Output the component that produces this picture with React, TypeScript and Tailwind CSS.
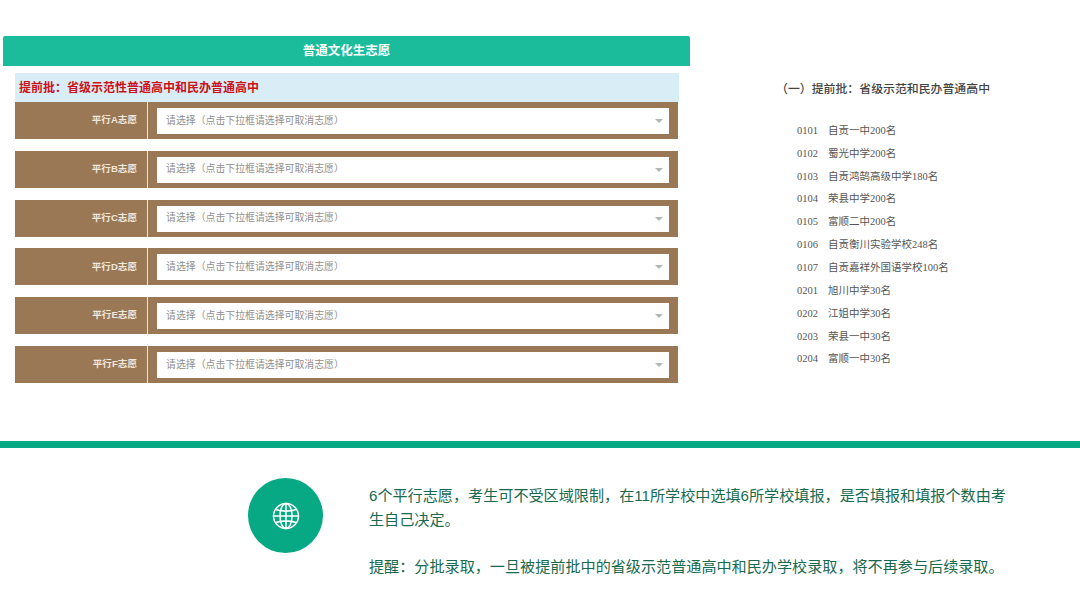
import React from "react";

const rows = ["A", "B", "C", "D", "E", "F"];
const schools: [string, string][] = [
  ["0101", "自贡一中200名"],
  ["0102", "蜀光中学200名"],
  ["0103", "自贡鸿鹄高级中学180名"],
  ["0104", "荣县中学200名"],
  ["0105", "富顺二中200名"],
  ["0106", "自贡衡川实验学校248名"],
  ["0107", "自贡嘉祥外国语学校100名"],
  ["0201", "旭川中学30名"],
  ["0202", "江姐中学30名"],
  ["0203", "荣县一中30名"],
  ["0204", "富顺一中30名"],
];

const sans = "font-['Liberation_Sans','Noto_Sans_CJK_SC',sans-serif]";

export default function App() {
  return (
    <div className={`w-[1080px] h-[608px] overflow-hidden bg-white flex flex-col ${sans}`}>
      <div className="h-[441px] flex items-start pt-[36px] pl-[3px] shrink-0">
        <div className="w-[687px] shrink-0">
          <div className="h-[30px] pt-[1px] bg-[#1abc9c] rounded-t-[2px] flex items-center justify-center text-white text-[12.5px] font-bold">
            普通文化生志愿
          </div>
          <div className="pt-[7px] pl-[12px] w-[676px]">
            <div className="h-[29px] bg-[#d9edf7] flex items-center pl-[4px] text-[12px] font-bold text-[#cc1118] w-[664px]">
              提前批：省级示范性普通高中和民办普通高中
            </div>
            <div className="flex flex-col gap-[11.8px] w-[663px]">
              {rows.map((r) => (
                <div key={r} className="h-[37px] bg-[#9b7855] flex">
                  <div className="w-[133px] shrink-0 border-r border-[#f0e6da] flex items-center justify-end pr-[10px] text-[9.6px] text-[#f0e6da] font-semibold">
                    平行{r}志愿
                  </div>
                  <div className="ml-[9px] mt-[6px] w-[512px] h-[26px] bg-white flex items-center justify-between pl-[9px] pr-[6px] text-[9.9px] text-[#8f8f8f]">
                    <span>请选择（点击下拉框请选择可取消志愿）</span>
                    <span className="w-0 h-0 border-x-[4px] border-x-transparent border-t-[4px] border-t-[#b5b5b5]" />
                  </div>
                </div>
              ))}
            </div>
          </div>
        </div>
        <div className="ml-[88px] pt-[46px] text-[#444]">
          <div className="text-[11.9px] font-medium leading-[14px] -ml-[2px]">（一）提前批：省级示范和民办普通高中</div>
          <div className="mt-[23.4px] ml-[19px] flex flex-col text-[#555]">
            {schools.map(([code, name]) => (
              <div key={code} className="h-[22.85px] flex items-center font-['Liberation_Serif','Noto_Sans_CJK_SC',serif] text-[10.5px]">
                <span className="w-[31px]">{code}</span>
                <span>{name}</span>
              </div>
            ))}
          </div>
        </div>
      </div>
      <div className="h-[7px] bg-[#07a884] shrink-0" />
      <div className="flex items-start pl-[248px] pt-[30px]">
        <div className="w-[75px] h-[75px] rounded-full bg-[#07a884] flex items-center justify-center shrink-0">
          <svg width="28" height="28" viewBox="0 0 28 28" fill="none" stroke="#fff" strokeWidth="1.5">
            <circle cx="14" cy="14" r="12.5" />
            <ellipse cx="14" cy="14" rx="6" ry="12.5" />
            <path d="M14 1.5V26.5M1.5 14H26.5M3.6 7.5C10 9.5 18 9.5 24.4 7.5M3.6 20.5C10 18.5 18 18.5 24.4 20.5" />
          </svg>
        </div>
        <div className="ml-[46px] w-[645px] text-[15.12px] leading-[24px] text-[#17694f] pt-[6px]">
          <p>6个平行志愿，考生可不受区域限制，在11所学校中选填6所学校填报，是否填报和填报个数由考生自己决定。</p>
          <p className="mt-[23px]">提醒：分批录取，一旦被提前批中的省级示范普通高中和民办学校录取，将不再参与后续录取。</p>
        </div>
      </div>
    </div>
  );
}
